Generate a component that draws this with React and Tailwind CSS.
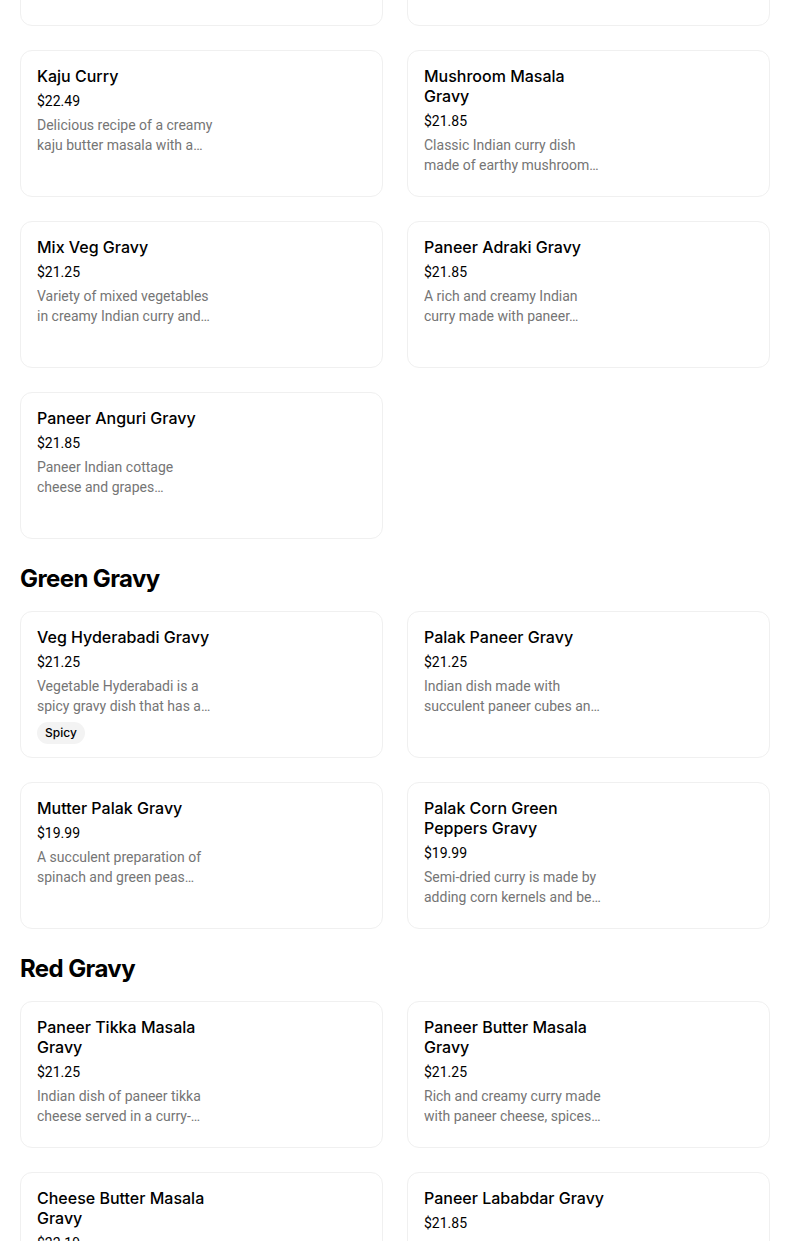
const sections = [
  {
    title: null,
    items: [
      { name: "Dal Makhani Gravy", price: "$19.99", desc: "Slow cooked black lentils in a buttery and creamy…" },
      { name: "Malai Kofta Gravy", price: "$21.85", desc: "Soft cottage cheese dumplings in a rich and…" },
      { name: "Kaju Curry", price: "$22.49", desc: "Delicious recipe of a creamy kaju butter masala with a…" },
      { name: "Mushroom Masala Gravy", price: "$21.85", desc: "Classic Indian curry dish made of earthy mushroom…" },
      { name: "Mix Veg Gravy", price: "$21.25", desc: "Variety of mixed vegetables in creamy Indian curry and…" },
      { name: "Paneer Adraki Gravy", price: "$21.85", desc: "A rich and creamy Indian curry made with paneer…" },
      { name: "Paneer Anguri Gravy", price: "$21.85", desc: "Paneer Indian cottage cheese and grapes…" },
    ],
  },
  {
    title: "Green Gravy",
    items: [
      { name: "Veg Hyderabadi Gravy", price: "$21.25", desc: "Vegetable Hyderabadi is a spicy gravy dish that has a…", tag: "Spicy" },
      { name: "Palak Paneer Gravy", price: "$21.25", desc: "Indian dish made with succulent paneer cubes an…" },
      { name: "Mutter Palak Gravy", price: "$19.99", desc: "A succulent preparation of spinach and green peas…" },
      { name: "Palak Corn Green Peppers Gravy", price: "$19.99", desc: "Semi-dried curry is made by adding corn kernels and be…" },
    ],
  },
  {
    title: "Red Gravy",
    items: [
      { name: "Paneer Tikka Masala Gravy", price: "$21.25", desc: "Indian dish of paneer tikka cheese served in a curry-…" },
      { name: "Paneer Butter Masala Gravy", price: "$21.25", desc: "Rich and creamy curry made with paneer cheese, spices…" },
      { name: "Cheese Butter Masala Gravy", price: "$22.19", desc: "Grated cheese in a rich buttery tomato gravy with…" },
      { name: "Paneer Lababdar Gravy", price: "$21.85", desc: "Paneer cubes in a tangy onion and tomato gravy…" },
    ],
  },
];

const bodyFont = { fontFamily: "Roboto, 'Noto Sans', sans-serif" };

function MenuCard({ item }) {
  return (
    <div className="h-[147px] overflow-hidden rounded-xl border border-[#f0f0f0] bg-white px-4 pt-[15px]">
      <div className="w-[184px]">
        <h3 className="text-base leading-5 font-medium text-black">{item.name}</h3>
        <p className="mt-[5px] text-sm leading-5 text-black" style={bodyFont}>
          {item.price}
        </p>
        <p className="mt-1 line-clamp-2 text-sm leading-5 text-[#757575]" style={bodyFont}>
          {item.desc}
        </p>
        {item.tag && (
          <span className="mt-1.5 inline-flex h-[22px] items-center rounded-full bg-[#f3f3f3] px-2 text-xs font-medium text-black">
            {item.tag}
          </span>
        )}
      </div>
    </div>
  );
}

export default function App() {
  return (
    <div
      className="min-h-screen overflow-hidden bg-white"
      style={{ fontFamily: "Inter, 'Noto Sans', sans-serif" }}
    >
      <div className="-mt-[121px] w-[770px] pl-5">
        {sections.map((section, i) => (
          <section key={i}>
            {section.title && (
              <h2 className="mt-6 mb-4 text-2xl leading-8 font-bold tracking-tight text-black">
                {section.title}
              </h2>
            )}
            <div className="grid grid-cols-2 gap-6">
              {section.items.map((item) => (
                <MenuCard key={item.name} item={item} />
              ))}
            </div>
          </section>
        ))}
      </div>
    </div>
  );
}
